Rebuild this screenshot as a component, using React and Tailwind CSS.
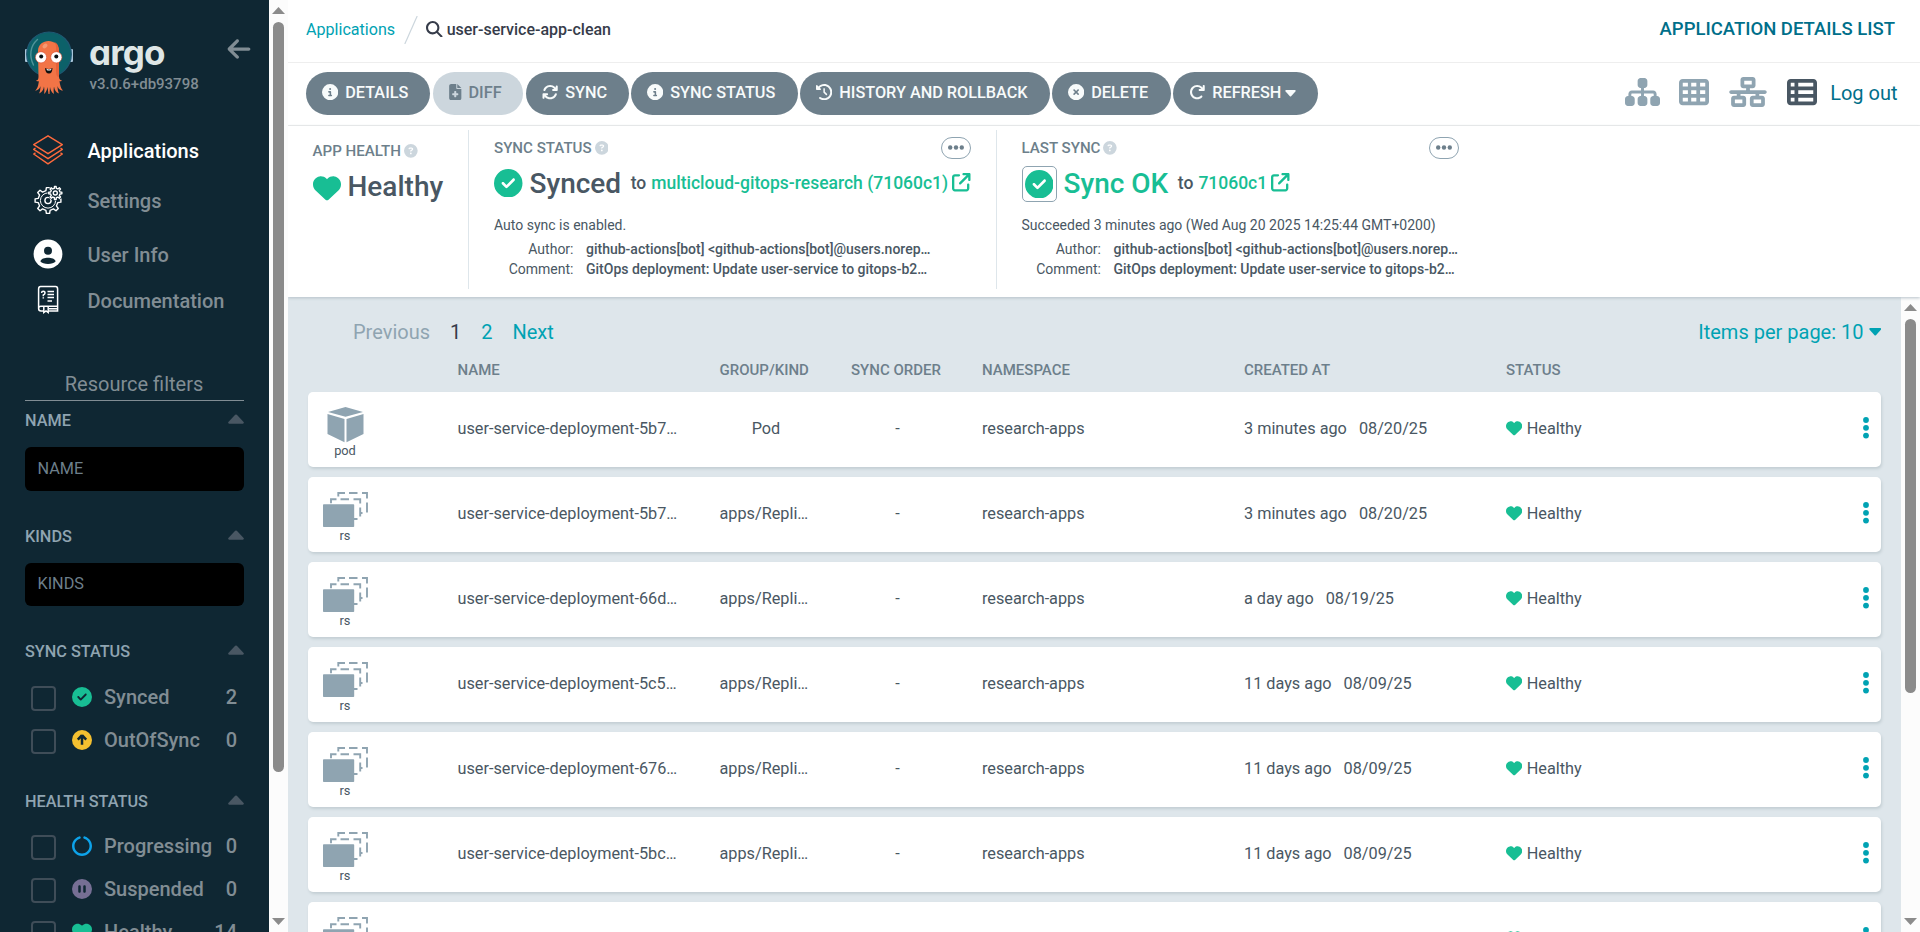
import React from 'react';
import {
  FaArrowLeft, FaArrowRotateRight, FaArrowsRotate, FaArrowUpRightFromSquare,
  FaCircleCheck, FaCircleInfo, FaCircleNotch, FaCirclePause, FaCircleQuestion,
  FaCircleXmark, FaClockRotateLeft, FaFileMedical, FaHeart,
  FaMagnifyingGlass, FaNetworkWired, FaTableCells, FaTableList,
} from 'react-icons/fa6';

const gear = (cx, cy, outer, inner, teeth) => {
  const step = (Math.PI * 2) / teeth;
  const pts = [];
  for (let i = 0; i < teeth; i++) {
    const a = i * step - Math.PI / 2;
    [[-0.27, inner], [-0.16, outer], [0.16, outer], [0.27, inner]].forEach(([k, r]) => {
      pts.push(`${(cx + r * Math.cos(a + k * step)).toFixed(2)},${(cy + r * Math.sin(a + k * step)).toFixed(2)}`);
    });
  }
  return pts.join(' ');
};

function Mascot() {
  return (
    <svg width="48" height="64" viewBox="0 0 48 64" className="shrink-0">
      <rect x="0" y="18" width="4" height="13" rx="1" fill="#a9c6da" />
      <rect x="44" y="18" width="4" height="13" rx="1" fill="#a9c6da" />
      <circle cx="24" cy="23.3" r="22.3" fill="#0c6169" stroke="#1f5873" strokeWidth="1.2" />
      <path d="M12.5 8.5C5 15 4 25 8.500 34" fill="none" stroke="#4f9399" strokeWidth="1.4" strokeLinecap="round" />
      <path d="M13 20C13 6.500 34 6.500 34 20L34 46C34 48.500 36 49.500 37 49.500C36 50.500 35 50.500 34.500 50.200C35 54 36 58 38 59.500C34.500 59.500 33 57 32.500 55C32.500 58 33 61 34 62.500C31 61.500 29.500 59 29 55.500C28.500 58.500 28.500 61 29 63C26.500 61.500 25.500 59 25 56L24.500 63L23.500 63L22.500 56C22 59 21 61.500 19 63C19.500 61 19.500 58 19 55.500C18.500 59 16.500 61.500 14 62.500C15 61 15.500 58 15.500 55C15 57 13.500 59.500 10 59.500C12.500 58 13.500 54 13.800 50.200C13 50.500 12 50.500 11 49.500C12.500 49.500 13.500 48.500 13.500 46Z" fill="#f27446" />
      <path d="M28 10.500C33 12 34 16 34 20L34 46C32 46 31 44 31 40V16C31 13 30 11.500 28 10.500Z" fill="#e8633a" />
      <ellipse cx="20" cy="15" rx="2.800" ry="2" transform="rotate(-40 20 15)" fill="#f79a72" />
      <circle cx="16" cy="26.300" r="5.600" fill="#fff" stroke="#d9482b" strokeWidth=".6" />
      <circle cx="31.300" cy="26.300" r="5.600" fill="#fff" stroke="#d9482b" strokeWidth=".6" />
      <circle cx="16.200" cy="25.600" r="2" fill="#0b1013" />
      <circle cx="31.300" cy="25.600" r="2" fill="#0b1013" />
      <path d="M20 37Q24 39 27.500 37Q27.300 42.500 24 42.500Q20.300 42.500 20 37Z" fill="#111" />
      <path d="M21.500 37.800Q24 39 26.500 37.800L26 39.200Q24 40 21.900 39.200Z" fill="#fff" />
    </svg>
  );
}

const LayersIcon = () => (
  <svg width="30" height="30" viewBox="0 0 30 30" fill="none" stroke="#ff6a3d" strokeWidth="1.400" strokeLinejoin="round">
    <path d="M15 .8L29.300 9.600L15 18.700L.7 9.600Z" />
    <path d="M2.500 13L.7 14.300L15 23.700L29.300 14.300L27.500 13" />
    <path d="M2.500 17.800L.7 19L15 28.800L29.300 19L27.500 17.800" />
  </svg>
);

const GearsIcon = () => (
  <svg width="30" height="30" viewBox="0 0 30 30" fill="none" stroke="#fff" strokeWidth="1.400" strokeLinejoin="round">
    <polygon points={gear(15, 15.500, 13, 10, 8)} />
    <circle cx="15" cy="15.500" r="7.600" strokeWidth="1" />
    <circle cx="15" cy="15.500" r="3.100" />
    <circle cx="22.300" cy="8" r="7.800" fill="#0f2733" stroke="none" />
    <polygon points={gear(22.300, 8, 6.600, 4.800, 8)} />
    <circle cx="22.300" cy="8" r="2" />
  </svg>
);

const UserIcon = () => (
  <svg width="30" height="30" viewBox="0 0 30 30">
    <circle cx="15" cy="15" r="14.400" fill="#fff" />
    <circle cx="15" cy="11.700" r="4" fill="#0f2733" />
    <path d="M7.300 22.300C9 17.700 21 17.700 22.700 22.300C20 26 10 26 7.300 22.300Z" fill="#0f2733" />
  </svg>
);

const BookIcon = () => (
  <svg width="30" height="30" viewBox="0 0 30 30" fill="none" stroke="#fff" strokeWidth="1.500">
    <path d="M5.600 23.500V4Q5.600 1.600 7.600 1.600H22.600Q24.600 1.600 24.600 4V21.300H8Q5.600 21.300 5.600 23.500Q5.600 26 8 26H10.500M15.500 26H24.600V21.300M16 23.700H24" />
    <path d="M10.800 21.500V27.500L13 26L15.200 27.500V21.500" />
    <path d="M14.500 6.500H21M14.500 9.500H21M14.500 12.500H21M14.500 16H19" strokeWidth="1.300" />
    <path d="M8.600 8Q8.600 6.300 10.200 6.300Q12 6.300 12 8Q12 9.300 10.300 10V11.200M10.300 12.300V13.600" strokeWidth="1.500" />
  </svg>
);

const PodIcon = () => (
  <svg width="46" height="36" viewBox="0 0 46 36" fill="#8fa4b1">
    <path d="M22.500 0L40 5L22.500 9.800L5 5ZM4.500 7L21.500 12V35.300L4.500 27ZM40.500 7L23.500 12V35.300L40.500 27Z" />
  </svg>
);

const RsIcon = () => (
  <svg width="46" height="36" viewBox="0 0 46 36" fill="none" stroke="#8fa4b1" strokeWidth="1.900">
    <rect x="0" y="12.300" width="31.200" height="22.700" rx=".8" fill="#8fa4b1" stroke="none" />
    <path d="M8 11.300V7.300H13.500M17.500 7.300H26M30.500 7.300H37.200V11.500M37.200 15.500V24.500M37.200 21H39.500M31 27H34.500" />
    <path d="M15.300 4.500V1H22M26 1H34.500M39 1H44V6.500M44 10.500V20.500" />
  </svg>
);

const CaretDown = ({ className }) => (
  <svg viewBox="0 0 12 8" fill="currentColor" className={className}>
    <path d="M1 0H11Q12.500 .3 11.600 1.700L6.700 7.200Q6 7.800 5.300 7.200L.4 1.700Q-.5 .3 1 0Z" />
  </svg>
);

const OutOfSyncIcon = () => (
  <svg width="20" height="20" viewBox="0 0 20 20">
    <circle cx="10" cy="10" r="10" fill="#f4c030" />
    <path d="M10 5.200L14.200 9.600M10 5.200L5.800 9.600M10 6V14.800" fill="none" stroke="#0f2733" strokeWidth="2.500" />
  </svg>
);

function Scrollbar({ track, thumb }) {
  return (
    <div className={`flex w-[19px] shrink-0 flex-col items-center bg-[#fcfcfc] ${track}`}>
      <svg width="13" height="7" viewBox="0 0 13 7" fill="#8b8b8b" className="mt-[7px]"><path d="M6.500 0L13 7H0Z" /></svg>
      <div className={`mt-2 w-[11px] rounded-full bg-[#8b8b8b] ${thumb}`} />
      <svg width="13" height="7" viewBox="0 0 13 7" fill="#8b8b8b" className="mt-auto mb-[7px]"><path d="M6.500 7L0 0H13Z" /></svg>
    </div>
  );
}

function NavItem({ icon, label, active, className }) {
  return (
    <div className={`flex items-center text-[20px] font-medium ${active ? 'text-white' : 'text-[#818d94]'} ${className}`}>
      <span className="mr-[24.500px] ml-[33px] pb-[3px]">{icon}</span>
      {label}
    </div>
  );
}

function FilterTitle({ children, className }) {
  return (
    <div className={`flex h-5 items-center justify-between text-[16.250px] font-medium text-[#8fa4b1] ${className}`}>
      {children}
      <svg width="16" height="10" viewBox="0 0 16 10" fill="#495763" className="mb-[4px]"><path d="M1.200 9.800Q-.6 9.300.6 7.800L7.200.8Q8 .1 8.800.8L15.400 7.800Q16.600 9.300 14.800 9.800Z" /></svg>
    </div>
  );
}

function FilterRow({ icon, label, count }) {
  return (
    <div className="flex h-[43px] shrink-0 items-start pr-[7px] pl-[6px] text-[20px] font-medium text-[#818d94]">
      <span className="mt-2 h-[25px] w-[25px] rounded-[4px] border-2 border-[#3f4d58]" />
      <span className="mt-[8.500px] ml-4 text-[20px]">{icon}</span>
      <span className="mt-[5px] ml-[12px] leading-[28px]">{label}</span>
      <span className="mt-[5px] ml-auto leading-[28px]">{count}</span>
    </div>
  );
}

function Sidebar() {
  return (
    <aside className="flex h-[932px] w-[269px] shrink-0 flex-col overflow-hidden bg-[#0f2733]">
      <div className="flex h-[126px] shrink-0 items-start pt-[31px] pl-[25px]">
        <Mascot />
        <div className="ml-4 flex flex-col">
          <span className="h-[43px] w-[110px] pt-[2px] font-['Inter',sans-serif] text-[35px] leading-[39px] font-bold tracking-[-0.9px] text-[#dee6e6] [font-feature-settings:'cv11']">argo</span>
          <span className="mt-[1px] ml-[.5px] text-[15px] leading-[18px] font-medium text-[#818d94]">v3.0.6+db93798</span>
        </div>
        <FaArrowLeft className="mt-[5px] ml-[26.500px] text-[26px] text-[#818d94]" />
      </div>
      <NavItem className="h-[50px] shrink-0" icon={<LayersIcon />} label="Applications" active />
      <NavItem className="h-[50px] shrink-0" icon={<GearsIcon />} label="Settings" />
      <NavItem className="mt-[6px] h-[46px] shrink-0" icon={<UserIcon />} label="User Info" />
      <NavItem className="h-[46px] shrink-0" icon={<BookIcon />} label="Documentation" />
      <div className="mx-[25px] mt-[44px] flex flex-col">
        <div className="h-[33px] border-b border-[#818d94] pr-[1px] text-center text-[20px] leading-[32px] text-[#818d94]">Resource filters</div>
        <FilterTitle className="mt-[10px]">NAME</FilterTitle>
        <div className="mt-4 h-11 rounded-[6px] bg-black px-[12.500px] text-[16.250px] leading-[43px] text-[#6d7f8b]">NAME</div>
        <FilterTitle className="mt-[36px]">KINDS</FilterTitle>
        <div className="mt-[16px] h-[43px] rounded-[6px] bg-black px-[12.500px] text-[16.250px] leading-[41px] text-[#6d7f8b]">KINDS</div>
        <FilterTitle className="mt-[36px]">SYNC STATUS</FilterTitle>
        <div className="mt-[16px] flex flex-col">
          <FilterRow icon={<FaCircleCheck className="text-[#18be94]" />} label="Synced" count="2" />
          <FilterRow icon={<OutOfSyncIcon />} label="OutOfSync" count="0" />
        </div>
        <FilterTitle className="mt-[28px]">HEALTH STATUS</FilterTitle>
        <div className="mt-[15px] flex flex-col">
          <FilterRow icon={<FaCircleNotch className="text-[#0da3ea]" />} label="Progressing" count="0" />
          <FilterRow icon={<FaCirclePause className="text-[#766f94]" />} label="Suspended" count="0" />
          <FilterRow icon={<FaHeart className="text-[#18be94]" />} label="Healthy" count="14" />
        </div>
      </div>
    </aside>
  );
}

function ToolButton({ icon, label, className, caret }) {
  return (
    <button className={`flex h-[43px] items-center rounded-full pb-[1px] pl-4 text-[16.250px] font-medium whitespace-nowrap ${className}`}>
      <span className="mr-[7px] pb-[2px]">{icon}</span>
      {label}
      {caret && <CaretDown className="ml-1 h-[7px] w-[11px]" />}
    </button>
  );
}

function PanelTitle({ children }) {
  return (
    <span className="flex items-center text-[15.100px] leading-5 font-medium text-[#6d7f8b]">
      {children}
      <FaCircleQuestion className="ml-[3px] text-[13.700px] text-[#ccd6dd]" />
    </span>
  );
}

function MoreButton() {
  return (
    <span className="flex h-[22px] w-[30px] items-center justify-center rounded-[11px] border border-[#8fa4b1]">
      <svg width="16" height="5" viewBox="0 0 16 5" fill="#6d7f8b" className="mb-[1px]">
        <circle cx="2.200" cy="2.500" r="2.200" /><circle cx="8" cy="2.500" r="2.200" /><circle cx="13.800" cy="2.500" r="2.200" />
      </svg>
    </span>
  );
}

function Revision({ first }) {
  return (
    <div className="text-[14px] leading-5 text-[#495763]">
      <div>{first}</div>
      {[['Author:', 'github-actions[bot] <github-actions[bot]@users.norep…'], ['Comment:', 'GitOps deployment: Update user-service to gitops-b2…']].map(([k, v], i) => (
        <div key={k} className={`flex ${i === 0 ? 'mt-1' : ''}`}>
          <span className="w-[79.500px] text-right">{k}</span>
          <span className="ml-[12.500px] font-medium whitespace-nowrap">{v}</span>
        </div>
      ))}
    </div>
  );
}

function StatusPanel() {
  return (
    <section className="relative flex h-[171px] shrink-0 bg-white shadow-[0_1px_3px_#b5c0c8]">
      <div className="mt-1 flex h-[159px] w-[181px] flex-col border-r border-[#dee6eb] pl-[24.500px]">
        <div className="mt-[11px]"><PanelTitle>APP HEALTH</PanelTitle></div>
        <div className="mt-[10px] flex items-center text-[28px] leading-[32px] font-medium text-[#495763]">
          <FaHeart className="mt-[2px] mr-[7px] text-[28px] text-[#18be94]" />Healthy
        </div>
      </div>
      <div className="mt-1 flex h-[159px] w-[528px] flex-col border-r border-[#dee6eb] pr-[25px] pl-[25px]">
        <div className="mt-[7px] flex h-[22px] items-center justify-between"><PanelTitle>SYNC STATUS</PanelTitle><MoreButton /></div>
        <div className="mt-2 flex h-[32px] items-center text-[17.500px] font-medium whitespace-nowrap text-[#495763]">
          <FaCircleCheck className="mr-[7px] shrink-0 text-[28.500px] text-[#18be94]" />
          <span className="pt-[1px] text-[28px]">Synced</span>
          <span className="ml-[9.500px]">to</span>
          <span className="ml-[5px] text-[#18be94]">multicloud-gitops-research (71060c1)</span>
          <FaArrowUpRightFromSquare className="mb-[1px] ml-1 shrink-0 text-[18.500px] text-[#18be94]" />
        </div>
        <div className="mt-[16px]"><Revision first="Auto sync is enabled." /></div>
      </div>
      <div className="mt-1 flex h-[159px] w-[486.500px] flex-col pr-[24.500px] pl-[24.500px]">
        <div className="mt-[7px] flex h-[22px] items-center justify-between"><PanelTitle>LAST SYNC</PanelTitle><MoreButton /></div>
        <div className="mt-2 flex h-[32px] items-center text-[17.500px] font-medium whitespace-nowrap text-[#495763]">
          <span className="mt-[2px] mr-[7px] flex h-9 w-[35px] items-center justify-center rounded-[5px] border border-[#8fa4b1]">
            <FaCircleCheck className="text-[28.500px] text-[#18be94]" />
          </span>
          <span className="pt-[1px] text-[28px] text-[#18be94]">Sync OK</span>
          <span className="ml-[9.500px]">to</span>
          <span className="ml-[5px] text-[#18be94]">71060c1</span>
          <FaArrowUpRightFromSquare className="mb-[1px] ml-1 text-[18.500px] text-[#18be94]" />
        </div>
        <div className="mt-[16px] whitespace-nowrap"><Revision first="Succeeded 3 minutes ago (Wed Aug 20 2025 14:25:44 GMT+0200)" /></div>
      </div>
    </section>
  );
}

const rows = [
  ['pod', 'user-service-deployment-5b7…', 'Pod', '3 minutes ago', '08/20/25'],
  ['rs', 'user-service-deployment-5b7…', 'apps/Repli…', '3 minutes ago', '08/20/25'],
  ['rs', 'user-service-deployment-66d…', 'apps/Repli…', 'a day ago', '08/19/25'],
  ['rs', 'user-service-deployment-5c5…', 'apps/Repli…', '11 days ago', '08/09/25'],
  ['rs', 'user-service-deployment-676…', 'apps/Repli…', '11 days ago', '08/09/25'],
  ['rs', 'user-service-deployment-5bc…', 'apps/Repli…', '11 days ago', '08/09/25'],
  ['rs', 'user-service-deployment-755…', 'apps/Repli…', '11 days ago', '08/09/25'],
];

function ResourceRow({ row: [kind, name, group, age, date] }) {
  return (
    <div className="grid h-[75px] shrink-0 grid-cols-[149.500px_262px_131.500px_131px_262px_262px_1fr_18.500px] items-center rounded-[5px] bg-white text-[16.250px] text-[#495763] shadow-[1px_2px_3px_#c3ced3]">
      <div className="flex h-full w-[46px] flex-col items-center self-start ml-[15px] pt-[15px]">
        {kind === 'pod' ? <PodIcon /> : <RsIcon />}
        <span className="-ml-[2px] text-[12.800px] leading-4">{kind}</span>
      </div>
      <span className="whitespace-nowrap">{name}</span>
      <span className={kind === 'pod' ? 'w-[93px] text-center' : ''}>{group}</span>
      <span className="w-[93px] text-center">-</span>
      <span>research-apps</span>
      <span className="flex gap-3"><span>{age}</span><span>{date}</span></span>
      <span className="flex items-center"><FaHeart className="mr-[4.500px] mb-[2px] text-[16.250px] text-[#18be94]" />Healthy</span>
      <svg width="6" height="22" viewBox="0 0 6 22" fill="#00a2b3" className="mb-[3px]">
        <circle cx="3" cy="3" r="2.900" /><circle cx="3" cy="10.800" r="2.900" /><circle cx="3" cy="18.600" r="2.900" />
      </svg>
    </div>
  );
}

function ResourceList() {
  return (
    <div className="flex h-[635px] w-[1613px] flex-col overflow-hidden bg-[#dee6eb] pr-5 pl-5">
      <div className="mt-5 flex h-[30px] shrink-0 items-center pl-[45px] text-[20px] leading-[30px] text-[#00a2b3]">
        <span className="text-[#8fa4b1]">Previous</span>
        <span className="ml-5 text-[#363c4a]">1</span>
        <span className="ml-5">2</span>
        <span className="ml-5">Next</span>
        <span className="ml-auto flex items-center">Items per page: 10<CaretDown className="ml-[5px] h-2 w-[12.500px]" /></span>
      </div>
      <div className="mt-[12px] mb-[13px] grid h-5 shrink-0 grid-cols-[149.500px_262px_131.500px_131px_262px_262px_1fr] items-center text-[15px] font-medium text-[#6d7f8b]">
        <span /><span>NAME</span><span>GROUP/KIND</span><span>SYNC ORDER</span><span>NAMESPACE</span><span>CREATED AT</span><span>STATUS</span>
      </div>
      <div className="flex flex-col gap-[10px]">
        {rows.map((r, i) => <ResourceRow key={i} row={r} />)}
      </div>
    </div>
  );
}

export default function App() {
  return (
    <div className="flex h-[932px] w-[1920px] overflow-hidden bg-white font-['Roboto',sans-serif]">
      <Sidebar />
      <Scrollbar track="h-[932px]" thumb="h-[750px]" />
      <main className="flex h-[932px] w-[1632px] flex-col overflow-hidden">
        <header className="flex h-[63px] shrink-0 items-center border-b border-[#eeeeee] pr-[25px] pb-[3px] pl-[18px] text-[16px]">
          <span className="pt-[1.500px] text-[16.100px] text-[#00a2b3]">Applications</span>
          <svg width="14" height="28" viewBox="0 0 14 28" stroke="#ccd6dd" strokeWidth="1.200" className="ml-[9px]"><path d="M.8 28L13.200 0" /></svg>
          <FaMagnifyingGlass className="ml-2 mb-[1px] text-[16.500px] text-[#363c4a]" />
          <span className="ml-1 font-medium text-[#363c4a]">user-service-app-clean</span>
          <span className="ml-auto text-[18.500px] font-medium text-[#006f8a]">APPLICATION DETAILS LIST</span>
        </header>
        <div className="flex h-[63px] shrink-0 items-center border-b border-[#eeeeee] pl-[18px]">
          <div className="flex pb-[1px]">
            <ToolButton className="w-[124px] bg-[#6d7f8b] text-[#f8fbfb]" icon={<FaCircleInfo />} label="DETAILS" />
            <ToolButton className="ml-[3px] w-[90px] bg-[#ccd6dd] text-[#6d7f8b]" icon={<FaFileMedical className="w-[12.500px]" />} label="DIFF" />
            <ToolButton className="ml-[3px] w-[103px] bg-[#6d7f8b] text-[#f8fbfb]" icon={<FaArrowsRotate />} label="SYNC" />
            <ToolButton className="ml-[2px] w-[167px] bg-[#6d7f8b] text-[#f8fbfb]" icon={<FaCircleInfo />} label="SYNC STATUS" />
            <ToolButton className="ml-[2px] w-[250px] bg-[#6d7f8b] text-[#f8fbfb]" icon={<FaClockRotateLeft />} label="HISTORY AND ROLLBACK" />
            <ToolButton className="ml-[2px] w-[119px] bg-[#6d7f8b] text-[#f8fbfb]" icon={<FaCircleXmark />} label="DELETE" />
            <ToolButton className="ml-[2px] w-[145px] bg-[#6d7f8b] text-[#f8fbfb]" icon={<FaArrowRotateRight />} label="REFRESH" caret />
          </div>
          <div className="ml-auto flex items-center pr-[22.500px] pb-[5px] text-[30px] text-[#8fa4b1]">
            <svg width="35" height="28" viewBox="0 0 576 448" preserveAspectRatio="none" fill="currentColor"><path transform="translate(0 -32)" d="M208 80c0-26.500 21.500-48 48-48l64 0c26.500 0 48 21.500 48 48l0 64c0 26.500-21.500 48-48 48l-8 0 0 40 152 0c30.900 0 56 25.100 56 56l0 32 8 0c26.500 0 48 21.500 48 48l0 64c0 26.500-21.500 48-48 48l-64 0c-26.500 0-48-21.500-48-48l0-64c0-26.500 21.500-48 48-48l8 0 0-32c0-4.400-3.600-8-8-8l-152 0 0 40 8 0c26.500 0 48 21.500 48 48l0 64c0 26.500-21.500 48-48 48l-64 0c-26.500 0-48-21.500-48-48l0-64c0-26.500 21.500-48 48-48l8 0 0-40-152 0c-4.400 0-8 3.600-8 8l0 32 8 0c26.500 0 48 21.500 48 48l0 64c0 26.500-21.500 48-48 48l-64 0c-26.500 0-48-21.500-48-48l0-64c0-26.500 21.500-48 48-48l8 0 0-32c0-30.900 25.100-56 56-56l152 0 0-40-8 0c-26.500 0-48-21.500-48-48l0-64z" /></svg>
            <FaTableCells className="ml-[19px]" />
            <FaNetworkWired className="ml-5 h-[30px] w-[38px]" />
            <FaTableList className="ml-5 text-[#495763]" />
            <span className="ml-[13.500px] pt-[3px] text-[20px] leading-[24px] text-[#006f8a]">Log out</span>
          </div>
        </div>
        <StatusPanel />
        <div className="flex">
          <ResourceList />
          <Scrollbar track="h-[635px]" thumb="h-[374px]" />
        </div>
      </main>
    </div>
  );
}
